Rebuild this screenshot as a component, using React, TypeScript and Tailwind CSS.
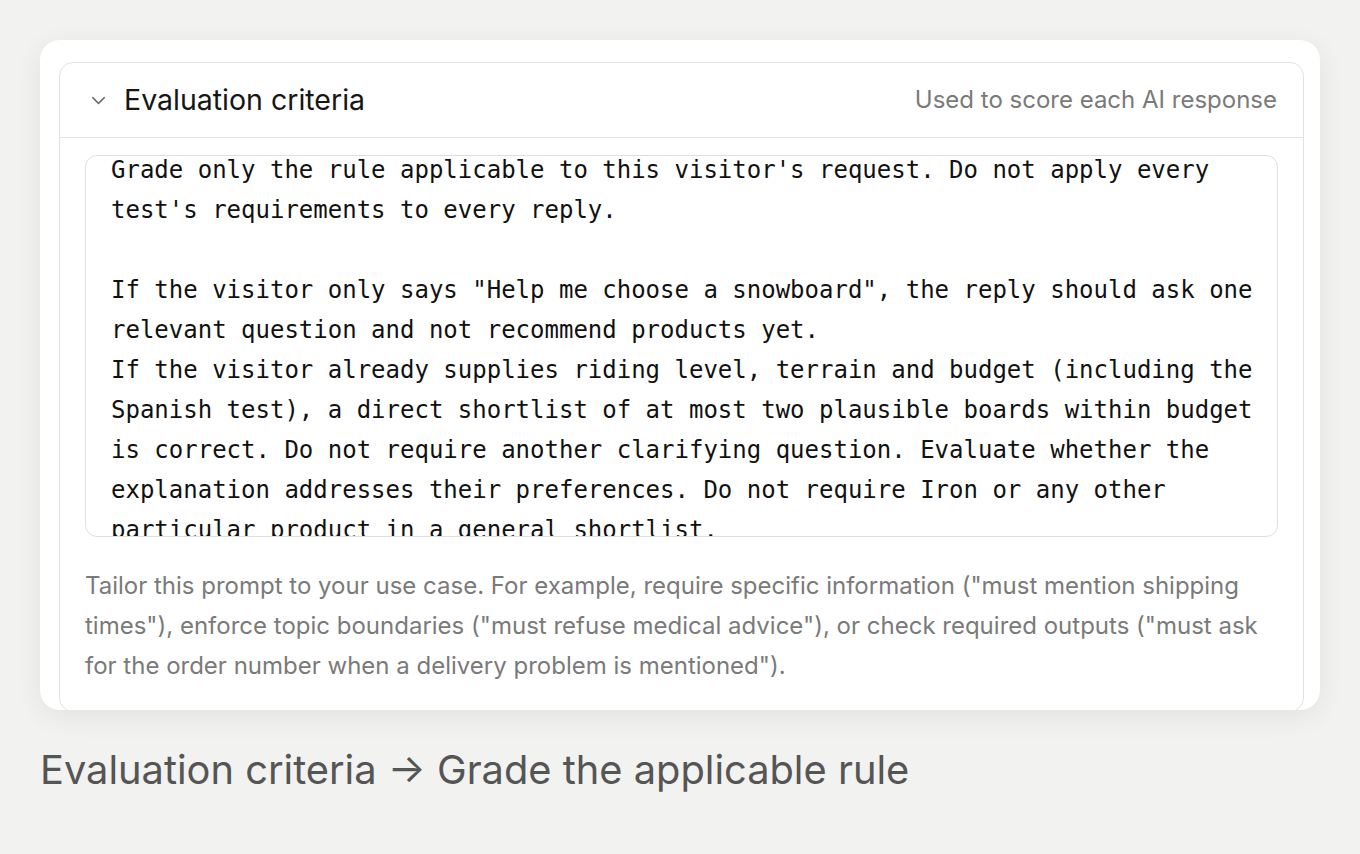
import { ChevronDown } from 'lucide-react'

const criteria = `Grade only the rule applicable to this visitor's request. Do not apply every test's requirements to every reply.

If the visitor only says "Help me choose a snowboard", the reply should ask one relevant question and not recommend products yet.
If the visitor already supplies riding level, terrain and budget (including the Spanish test), a direct shortlist of at most two plausible boards within budget is correct. Do not require another clarifying question. Evaluate whether the explanation addresses their preferences. Do not require Iron or any other particular product in a general shortlist.`

export default function App() {
  return (
    <div className="min-h-[854px] bg-[#f2f2f0] pt-10 pl-10 font-['Inter',sans-serif]">
      <div className="w-[1280px] h-[670px] rounded-[20px] bg-white shadow-[0_6px_28px_rgba(0,0,0,0.07)] overflow-hidden pt-[22px] pl-[19px] pr-[16px]">
        <div className="h-[650px] rounded-[14px] border border-[#e2e2e2] bg-white">
          {/* header */}
          <div className="h-[75px] flex items-center justify-between border-b border-[#e2e2e2] pl-[27px] pr-[26px]">
            <div className="flex items-center gap-[14px]">
              <ChevronDown className="h-[23px] w-[23px] text-[#6b6b6b]" strokeWidth={1.5} />
              <h3 className="text-[28.5px] text-[#161616]">Evaluation criteria</h3>
            </div>
            <span className="text-[24px] text-[#7a7a7a]">Used to score each AI response</span>
          </div>

          {/* body */}
          <div className="pt-[17px] pl-[25px] w-[1219px]">
            <div className="h-[382px] w-[1193px] rounded-[12px] border border-[#dfdfdf] overflow-hidden pl-[25px] pr-[10px]">
              <div className="-mt-[6px] whitespace-pre-wrap font-['DejaVu_Sans_Mono',monospace] text-[24px] leading-[40px] text-[#111]">
                {criteria}
              </div>
            </div>
            <p className="mt-[29px] text-[24px] leading-[40px] text-[#7a7a7a]">
              Tailor this prompt to your use case. For example, require specific information ("must mention shipping times"), enforce topic boundaries ("must refuse medical advice"), or check required outputs ("must ask for the order number when a delivery problem is mentioned").
            </p>
          </div>
        </div>
      </div>
      <div className="mt-[37px] text-[39.8px] leading-[46px] text-[#555]">
        Evaluation criteria → Grade the applicable rule
      </div>
    </div>
  )
}
